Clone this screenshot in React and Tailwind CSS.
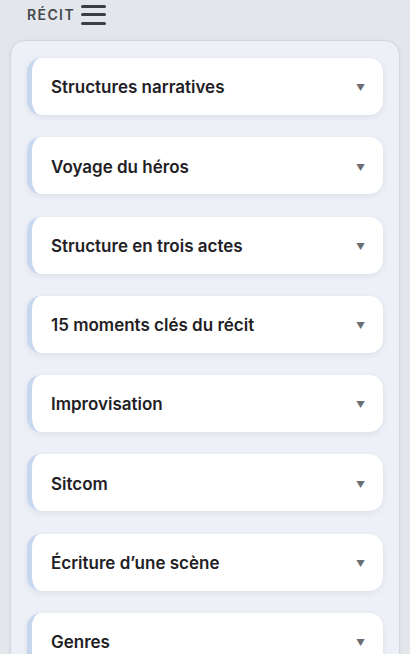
const SECTIONS = [
  'Structures narratives',
  'Voyage du héros',
  'Structure en trois actes',
  '15 moments clés du récit',
  'Improvisation',
  'Sitcom',
  'Écriture d’une scène',
  'Genres',
  'Personnages',
]

function Hamburger() {
  return (
    <div className="flex flex-col gap-[5.5px] w-[25px]">
      <span className="block h-[3px] rounded-full bg-[#3a3d42]" />
      <span className="block h-[3px] rounded-full bg-[#3a3d42]" />
      <span className="block h-[3px] rounded-full bg-[#3a3d42]" />
    </div>
  )
}

export default function App() {
  return (
    <div className="h-[654px] overflow-hidden bg-[#e3e6ea] font-['Inter','Liberation_Sans',sans-serif]">
      {/* Header */}
      <div className="flex items-center gap-[6px] pl-[27px] pt-[3px] h-[26px]">
        <span className="text-[14px] font-semibold tracking-[1.4px] text-[#45484d]">RÉCIT</span>
        <Hamburger />
      </div>

      {/* Panel */}
      <div className="mx-[10px] mt-[14px] rounded-[15px] border border-[#d3d7dd] bg-[#eef0f7] px-[16px] pt-[17px] shadow-[0_1px_4px_rgba(0,0,0,0.06)]">
        <div className="flex flex-col gap-[22.3px]">
          {SECTIONS.map((s) => (
            <div
              key={s}
              className="flex h-[57px] shrink-0 items-center justify-between rounded-[14px] border-l-[5px] border-[#c7d7ee] bg-white pl-[19px] pr-[18px] pt-[3px] shadow-[0_2px_6px_rgba(30,40,70,0.08)]"
            >
              <span className="text-[17px] font-semibold text-[#1f2125]">{s}</span>
              <span className="text-[9px] text-[#6b6e73]">▼</span>
            </div>
          ))}
        </div>
      </div>
    </div>
  )
}
